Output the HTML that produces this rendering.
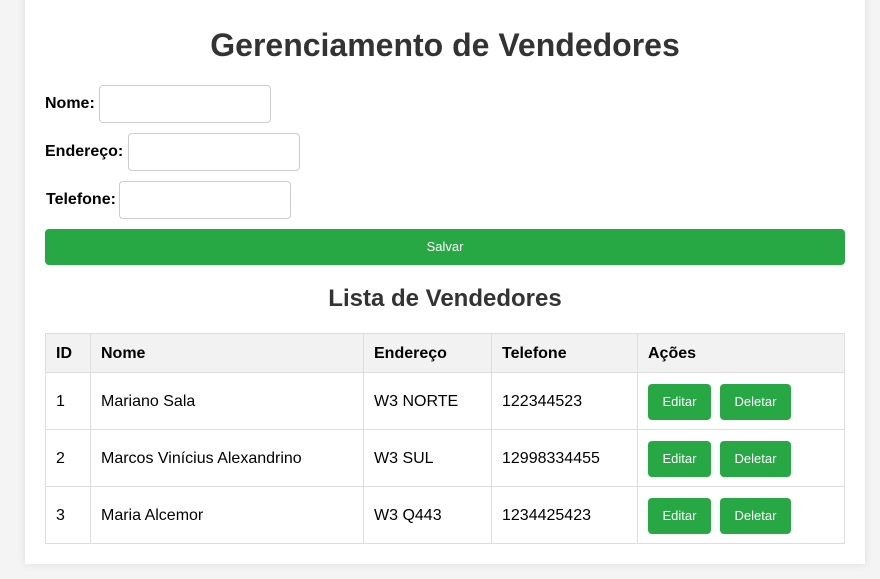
<!DOCTYPE html>
<html><head><meta charset="utf-8"><style>
*{box-sizing:border-box}
body{margin:0;background:#f4f4f4;font-family:"Liberation Sans",Arial,sans-serif;width:880px;height:579px;overflow:hidden;position:relative}
.c{position:absolute;left:25px;top:-10px;width:840px;height:574px;background:#fff;box-shadow:0 0 8px rgba(0,0,0,.1)}
h1{position:absolute;left:10px;width:870px;top:27px;margin:0;text-align:center;font-size:32px;color:#333;line-height:37px}
h2{position:absolute;left:0;width:890px;top:285px;margin:0;text-align:center;font-size:24px;color:#333;line-height:28px}
label{position:absolute;font-weight:bold;font-size:16px;color:#000}
.in{position:absolute;width:172px;height:38px;border:1px solid #ccc;border-radius:4px;background:#fff}
.save{position:absolute;left:45px;top:229px;width:800px;height:36px;background:#28a745;border-radius:4px;color:#fff;font-size:13px;text-align:center;line-height:36px}
table{position:absolute;left:45px;top:333px;width:800px;border-collapse:collapse;font-size:16px}
td,th{border:1px solid #ddd;padding:1px 10px 0;text-align:left;color:#000}
th{background:#f2f2f2;height:39px}
td{height:57px}
.b{display:inline-block;background:#28a745;color:#fff;font-size:13px;border-radius:4px;height:36px;line-height:36px;text-align:center;vertical-align:middle}
</style></head><body>
<div class="c"></div>
<h1>Gerenciamento de Vendedores</h1>
<label style="left:45px;top:95px">Nome:</label><div class="in" style="left:99px;top:85px"></div>
<label style="left:45px;top:143px">Endereço:</label><div class="in" style="left:128px;top:133px"></div>
<label style="left:46px;top:191px">Telefone:</label><div class="in" style="left:119px;top:181px"></div>
<div class="save">Salvar</div>
<h2>Lista de Vendedores</h2>
<table>
<tr><th style="width:45px">ID</th><th style="width:273px">Nome</th><th style="width:128px">Endereço</th><th style="width:146px">Telefone</th><th>Ações</th></tr>
<tr><td>1</td><td>Mariano Sala</td><td>W3 NORTE</td><td>122344523</td><td><span class="b" style="width:63px">Editar</span><span class="b" style="width:71px;margin-left:9px">Deletar</span></td></tr>
<tr><td>2</td><td>Marcos Vinícius Alexandrino</td><td>W3 SUL</td><td>12998334455</td><td><span class="b" style="width:63px">Editar</span><span class="b" style="width:71px;margin-left:9px">Deletar</span></td></tr>
<tr><td>3</td><td>Maria Alcemor</td><td>W3 Q443</td><td>1234425423</td><td><span class="b" style="width:63px">Editar</span><span class="b" style="width:71px;margin-left:9px">Deletar</span></td></tr>
</table>
</body></html>
